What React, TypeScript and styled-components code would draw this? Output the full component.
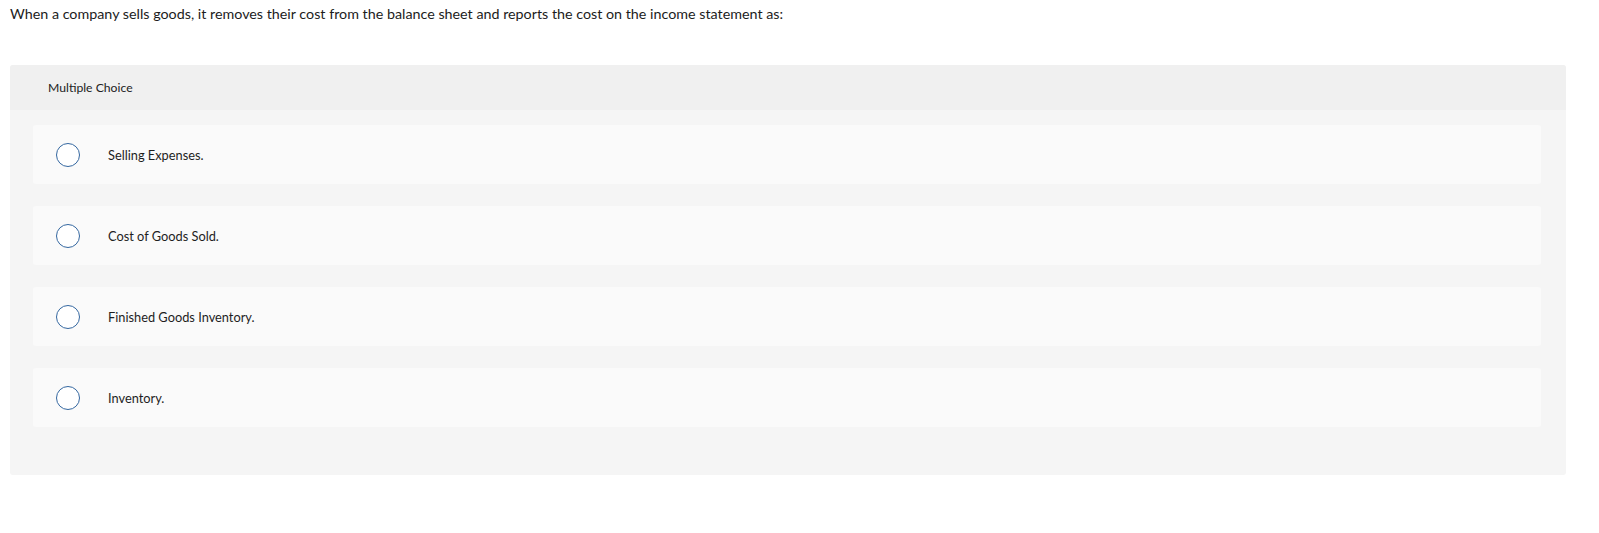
import React from "react";
import styled, { createGlobalStyle } from "styled-components";

const Global = createGlobalStyle`
  html, body { margin: 0; padding: 0; background: #ffffff; }
  body { font-family: Lato, "Liberation Sans", sans-serif; color: #1a1a1a; }
`;

const Page = styled.div`
  padding: 5px 33px 0 10px;
`;

const Question = styled.p`
  margin: 0;
  font-size: 14.3px;
  line-height: 18px;
  color: #1c1c1c;
`;

const Panel = styled.section`
  margin-top: 42px;
  background: #f5f5f5;
  border-radius: 3px;
  overflow: hidden;
  padding-bottom: 48px;
`;

const Header = styled.div`
  height: 45px;
  display: flex;
  align-items: center;
  padding-left: 38px;
  background: #f0f0f0;
  font-size: 12.2px;
  color: #222;
`;

const Options = styled.div`
  display: flex;
  flex-direction: column;
  gap: 22px;
  padding: 15px 25px 0 23px;
`;

const Option = styled.label`
  height: 59px;
  display: flex;
  align-items: center;
  background: #fafafa;
  border-radius: 3px;
  padding-left: 23px;
`;

const Radio = styled.span`
  width: 22px;
  height: 22px;
  border-radius: 50%;
  border: 1.5px solid #3467a0;
  background: #ffffff;
  flex-shrink: 0;
`;

const OptionText = styled.span`
  margin-left: 28px;
  font-size: 12.8px;
  color: #1e1e1e;
`;

const choices = [
  "Selling Expenses.",
  "Cost of Goods Sold.",
  "Finished Goods Inventory.",
  "Inventory.",
];

export default function App() {
  return (
    <>
      <Global />
      <Page>
        <Question>
          When a company sells goods, it removes their cost from the balance sheet and reports the cost on the income statement as:
        </Question>
        <Panel>
          <Header>Multiple Choice</Header>
          <Options>
            {choices.map((c) => (
              <Option key={c}>
                <Radio />
                <OptionText>{c}</OptionText>
              </Option>
            ))}
          </Options>
        </Panel>
      </Page>
    </>
  );
}
